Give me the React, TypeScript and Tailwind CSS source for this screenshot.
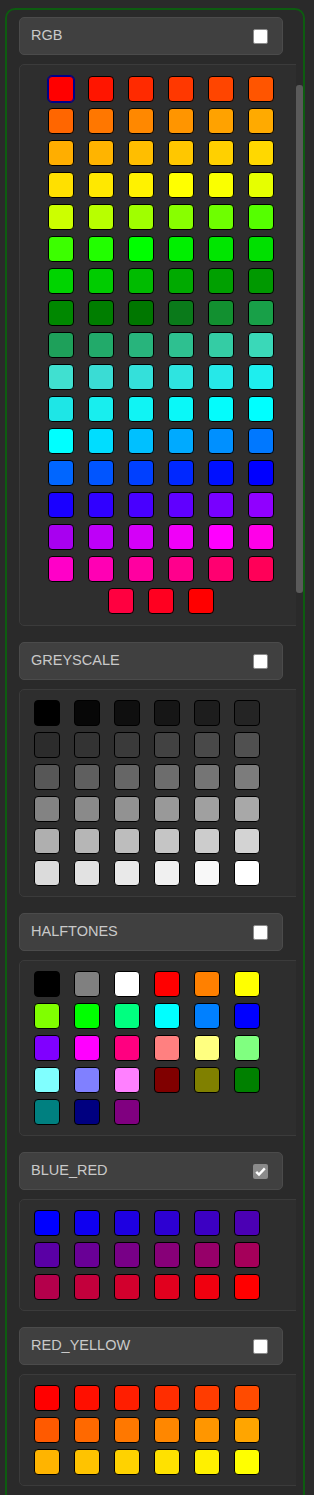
import React from "react";

const RGB = [
  "#ff0000", "#ff1500", "#ff2a00", "#ff3800", "#ff4500", "#ff5500",
  "#ff6600", "#ff7700", "#ff8800", "#ff9500", "#ffa200", "#ffaa00",
  "#ffae00", "#ffb400", "#ffbe00", "#ffc700", "#ffd000", "#ffd800",
  "#ffe000", "#ffe800", "#fff200", "#ffff00", "#faff00", "#e6ff00",
  "#ccff00", "#b8ff00", "#a0ff00", "#88ff00", "#6eff00", "#55ff00",
  "#3cff00", "#22ff00", "#00ff00", "#00f000", "#00e600", "#00e000",
  "#00d400", "#00cc00", "#00bb00", "#00aa00", "#00a000", "#009900",
  "#008800", "#007e00", "#007700", "#0a7a1a", "#129030", "#18a048",
  "#1ea05a", "#22aa6a", "#28b47c", "#2ec090", "#34cca4", "#3ad8b8",
  "#40e0d0", "#3adcd4", "#34e0da", "#2ee4e0", "#26e8e8", "#1eeeee",
  "#1ee6e6", "#18eeee", "#10f4f4", "#0af8f8", "#04fcfc", "#00ffff",
  "#00ffff", "#00ddff", "#00c0ff", "#00aaff", "#0090ff", "#0078ff",
  "#0066ff", "#0055ff", "#0040ff", "#0028ff", "#0010ff", "#0000ff",
  "#1a00ff", "#3000ff", "#4800ff", "#6000ff", "#7800ff", "#9000ff",
  "#a800f0", "#be00f8", "#d400f8", "#f000f8", "#ff00ff", "#ff00e8",
  "#ff00c8", "#ff00b4", "#ff00a0", "#ff008c", "#ff0070", "#ff0058",
  "#ff0040", "#ff0020", "#ff0000",
];

const hex2 = (n: number) => Math.round(n).toString(16).padStart(2, "0");

const GREY = Array.from({ length: 36 }, (_, i) => {
  const v = hex2((i * 255) / 35);
  return `#${v}${v}${v}`;
});

const HALF = [
  "#000000", "#808080", "#ffffff", "#ff0000", "#ff8000", "#ffff00",
  "#80ff00", "#00ff00", "#00ff80", "#00ffff", "#0080ff", "#0000ff",
  "#8000ff", "#ff00ff", "#ff0080", "#ff8080", "#ffff80", "#80ff80",
  "#80ffff", "#8080ff", "#ff80ff", "#800000", "#808000", "#008000",
  "#008080", "#000080", "#800080",
];

const BLUE_RED = Array.from({ length: 18 }, (_, i) => {
  const t = i / 17;
  return `#${hex2(255 * t)}00${hex2(255 * (1 - t))}`;
});

const RED_YELLOW = Array.from({ length: 18 }, (_, i) => `#ff${hex2((255 * i) / 17)}00`);

function Check({ checked }: { checked?: boolean }) {
  if (checked) {
    return (
      <span className="flex h-[15px] w-[15px] items-center justify-center rounded-[2px] bg-[#8a8a8a]">
        <svg viewBox="0 0 15 15" className="h-[15px] w-[15px]">
          <path d="M3.2 7.8l2.8 2.8L11.8 4.4" fill="none" stroke="#fff" strokeWidth="2.4" />
        </svg>
      </span>
    );
  }
  return <span className="h-[15px] w-[15px] rounded-[2px] border border-[#8a8a8a] bg-white" />;
}

function Section({
  title,
  colors,
  checked,
  center,
  selected,
  roomy,
}: {
  title: string;
  colors: string[];
  checked?: boolean;
  center?: boolean;
  selected?: number;
  roomy?: boolean;
}) {
  return (
    <div className="flex flex-col">
      <div className="flex h-[38px] w-[264px] items-center justify-between rounded-[5px] border border-[#4b4b4b] bg-[#404040] pl-[11px] pr-[14px]">
        <span className="text-[14.5px] text-[#c9c9c9]">{title}</span>
        <Check checked={checked} />
      </div>
      <div
        className={`mt-[9px] w-[284px] shrink-0 rounded-[5px] border border-[#3b3b3b] bg-[#2e2e2e] px-[14px] ${
          roomy ? "py-[11px]" : "py-[10px]"
        }`}
      >
        <div className={`flex flex-wrap gap-x-[14px] gap-y-[6px] ${center ? "justify-center" : "justify-start"}`}>
          {colors.map((c, i) => (
            <span
              key={i}
              style={{ backgroundColor: c }}
              className={`h-[26px] w-[26px] rounded-[4px] border ${
                i === selected
                  ? "border-[#000088] outline outline-1 outline-[#000088]"
                  : "border-black"
              }`}
            />
          ))}
        </div>
      </div>
    </div>
  );
}

export default function App() {
  return (
    <div className="h-[1495px] overflow-hidden bg-[#2a2a2a] pl-[5px] pt-[8px] font-['Liberation_Sans',Arial,sans-serif]">
      <div className="flex w-[300px] rounded-[10px] border-2 border-[#0d5c10] bg-[#2a2a2a] pb-[20px] pl-[12px] pt-[7px]">
        <div className="flex w-[277px] flex-col gap-4 overflow-hidden">
          <Section title="RGB" colors={RGB} center selected={0} roomy />
          <Section title="GREYSCALE" colors={GREY} />
          <Section title="HALFTONES" colors={HALF} />
          <Section title="BLUE_RED" colors={BLUE_RED} checked />
          <Section title="RED_YELLOW" colors={RED_YELLOW} />
        </div>
        <div className="w-[7px] shrink-0">
          <div className="mt-[68px] h-[508px] rounded-[3px] bg-[#5a5a5a]" />
        </div>
      </div>
    </div>
  );
}
